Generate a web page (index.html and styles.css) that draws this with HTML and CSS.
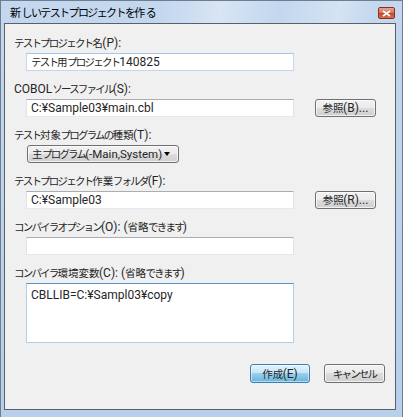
FILE: index.html
```html
<!DOCTYPE html>
<html lang="ja">
<head>
<meta charset="utf-8">
<title>新しいテストプロジェクトを作る</title>
<link rel="stylesheet" href="styles.css">
</head>
<body>
<div class="window">
  <div class="titlebar">
    <span class="title"><span class="ja"><span class="kj">新</span>しいテストプロジェクトを<span class="kj">作</span>る</span></span>
    <span class="close"><svg width="9" height="7" viewBox="0 0 9 7"><path d="M1 1 L8 6 M8 1 L1 6" stroke="#fff" stroke-width="1.6"/></svg></span>
  </div>
  <div class="client">
    <div class="group">
      <div class="label"><span class="ja">テストプロジェクト<span class="kj">名</span></span>(P):</div>
      <div class="row"><div class="input hover"><span class="ja">テスト<span class="kj">用</span>プロジェクト</span>140825</div></div>
    </div>
    <div class="group">
      <div class="label">COBOL<span class="ja">ソースファイル</span>(S):</div>
      <div class="row"><div class="input">C:¥Sample03¥main.cbl</div><div class="btn"><span class="ja"><span class="kj">参照</span></span>(B)...</div></div>
    </div>
    <div class="group">
      <div class="label"><span class="ja">テスト<span class="kj">対象</span>プログラムの<span class="kj">種類</span></span>(T):</div>
      <div class="row"><div class="combo"><span><span class="ja"><span class="kj">主</span>プログラム</span>(-Main,System)</span><span class="arrow"></span></div></div>
    </div>
    <div class="group">
      <div class="label"><span class="ja">テストプロジェクト<span class="kj">作業</span>フォルダ</span>(F):</div>
      <div class="row"><div class="input">C:¥Sample03</div><div class="btn"><span class="ja"><span class="kj">参照</span></span>(R)...</div></div>
    </div>
    <div class="group">
      <div class="label"><span class="ja">コンパイラオプション</span>(O): (<span class="ja"><span class="kj">省略</span>できます</span>)</div>
      <div class="row"><div class="input"></div></div>
    </div>
    <div class="group">
      <div class="label"><span class="ja">コンパイラ<span class="kj">環境変数</span></span>(C): (<span class="ja"><span class="kj">省略</span>できます</span>)</div>
      <div class="row"><div class="input textarea focus">CBLLIB=C:¥Sampl03¥copy</div></div>
    </div>
    <div class="actions">
      <div class="btn default"><span class="ja"><span class="kj">作成</span></span>(E)</div>
      <div class="btn"><span class="ja">キャンセル</span></div>
    </div>
  </div>
</div>
</body>
</html>
```
FILE: styles.css
```css
* { box-sizing: border-box; }
html, body { margin: 0; padding: 0; background: #ffffff; }
body {
  font-family: Roboto, "Noto Sans CJK JP", sans-serif;
  font-size: 12px;
  color: #262626;
}
.ja {
  font-family: "Noto Sans CJK JP", sans-serif;
  font-size: 10.5px;
  letter-spacing: -1.8px;
}
.ja .kj {
  letter-spacing: 0;
  margin-right: -0.5px;
}
.window {
  width: 403px;
  height: 417px;
  background: linear-gradient(to bottom, #c3d7ef 0%, #bcd2ec 60%, #b7cfea 100%);
  border: 1px solid #707d8c;
  border-bottom: none;
  padding: 0 6px 7px 3px;
  display: flex;
  flex-direction: column;
}
.titlebar {
  height: 22px;
  display: flex;
  align-items: center;
  justify-content: space-between;
  padding-left: 6px;
  padding-right: 1px;
  background: linear-gradient(100deg, rgba(255,255,255,0) 40%, rgba(255,255,255,0.35) 55%, rgba(255,255,255,0) 70%, rgba(255,255,255,0.3) 85%, rgba(255,255,255,0) 95%);
}
.title {
  color: #000;
  line-height: 16px;
}
.title .ja {
  font-size: 11px;
  letter-spacing: -1.6px;
}
.title .ja .kj { letter-spacing: 0.5px; margin-right: 0; }
.close {
  width: 17px;
  height: 12px;
  margin-top: 2px;
  border: 1px solid #8a3020;
  border-radius: 2px;
  background: linear-gradient(to bottom, #e8a493 0%, #d8745c 45%, #c24a2c 55%, #d4704f 100%);
  display: flex;
  align-items: center;
  justify-content: center;
}
.close svg { display: block; }
.client {
  flex: 1;
  background: #f0f0f0;
  border: 1px solid #5b5f66;
  padding: 11px 0 0 9px;
  display: flex;
  flex-direction: column;
  gap: 10px;
}
.group { display: flex; flex-direction: column; gap: 2px; }
.label { height: 16px; line-height: 16px; white-space: nowrap; }
.row {
  display: flex;
  align-items: center;
  gap: 21px;
  padding-left: 12px;
}
.input {
  width: 268px;
  height: 18px;
  background: #fff;
  border: 1px solid #e2e3ea;
  border-top-color: #abadb3;
  border-bottom-color: #e3e9ef;
  padding: 0 0 0 4px;
  line-height: 16px;
  white-space: nowrap;
  overflow: hidden;
}
.input.hover {
  border-color: #c4d7ec;
  border-top-color: #a9c6e4;
}
.input.textarea {
  height: 60px;
  padding-top: 3px;
}
.input.focus {
  border-color: #b5cfe7;
  border-top-color: #5593d0;
}
.btn {
  width: 61px;
  height: 18px;
  border: 1px solid #707070;
  border-radius: 3px;
  background: linear-gradient(to bottom, #f2f2f2 0%, #ebebeb 49%, #dddddd 50%, #cfcfcf 100%);
  box-shadow: inset 0 0 0 1px rgba(255,255,255,0.7);
  display: flex;
  align-items: center;
  justify-content: center;
  line-height: 16px;
  white-space: nowrap;
}
.combo {
  width: 152px;
  height: 18px;
  border: 1px solid #707070;
  border-radius: 3px;
  background: linear-gradient(to bottom, #f2f2f2 0%, #ebebeb 49%, #dddddd 50%, #cfcfcf 100%);
  box-shadow: inset 0 0 0 1px rgba(255,255,255,0.7);
  display: flex;
  align-items: center;
  justify-content: space-between;
  padding: 0 8px 0 4px;
  font-size: 11.5px;
  line-height: 16px;
  white-space: nowrap;
  margin-left: 1px;
}
.arrow {
  width: 0; height: 0;
  border-left: 3px solid transparent;
  border-right: 3px solid transparent;
  border-top: 4px solid #000;
}
.actions {
  display: flex;
  gap: 14px;
  padding-left: 236px;
  margin-top: 11px;
}
.actions .btn { height: 19px; }
.actions .btn.default { width: 60px; }
.btn.default {
  border-color: #3c7fb1;
  background: linear-gradient(to bottom, #e5f4fc 0%, #c4e5f6 49%, #98d1ef 50%, #68b3db 100%);
  box-shadow: inset 0 0 0 1px rgba(255,255,255,0.5);
}
```
